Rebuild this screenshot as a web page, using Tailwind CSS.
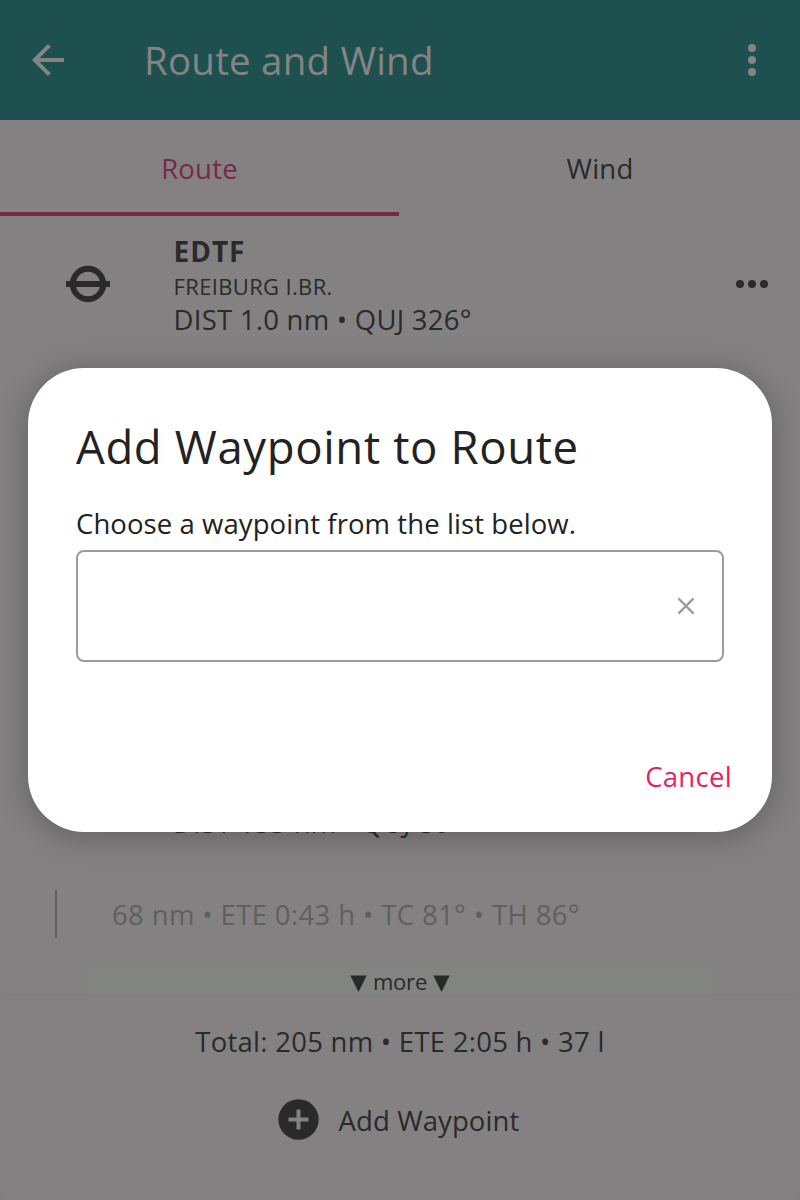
<!DOCTYPE html>
<html lang="en">
<head>
<meta charset="utf-8">
<meta name="viewport" content="width=device-width, initial-scale=1">
<title>Route and Wind</title>
<script src="https://cdn.jsdelivr.net/npm/@tailwindcss/browser@4"></script>
</head>
<body class="relative h-[1200px] w-[800px] overflow-hidden bg-[#848183] font-['Open_Sans',sans-serif] text-[27.5px] leading-8 tracking-[0.2px] text-[#2a2a2a]">
<div class="flex h-full flex-col whitespace-nowrap">
  <header class="flex h-[120px] shrink-0 items-center justify-between bg-[#1e5050] pr-6 pl-6 text-[#848484]">
    <div class="flex items-center">
      <svg class="size-12" viewBox="0 0 48 48" fill="none" stroke="currentColor" stroke-width="4"><path d="M40 24H11M25.4 9.4 10.8 24l14.6 14.6"/></svg>
      <h1 class="pl-[72px] text-[38.5px] leading-[50px]">Route and Wind</h1>
    </div>
    <svg class="size-12" viewBox="0 0 48 48" fill="currentColor"><circle cx="24" cy="12" r="4"/><circle cx="24" cy="24" r="4"/><circle cx="24" cy="36" r="4"/></svg>
  </header>
  <nav class="grid h-24 shrink-0 grid-cols-[399px_401px] text-center">
    <div class="border-b-4 border-[#7b2847] pt-[33px] text-[#7b2847]">Route</div>
    <div class="pt-[33px] pl-px">Wind</div>
  </nav>
  <main class="flex h-[780px] shrink-0 flex-col">
    <div class="flex h-[136px] items-center pl-16 pr-6">
      <svg class="size-12" viewBox="0 0 48 48" fill="none" stroke="currentColor" stroke-width="6"><circle cx="24" cy="24" r="15.2"/><path d="M2 24h44"/></svg>
      <div class="flex-1 pl-[61.5px]">
        <div class="font-bold text-[28px] tracking-[1px] leading-[38px]">EDTF</div>
        <div class="text-[22px] leading-[33px] tracking-[0.35px]">FREIBURG I.BR.</div>
        <div class="leading-[33px] tracking-[0.25px]">DIST 1.0 nm • QUJ 326°</div>
      </div>
      <svg class="size-12" viewBox="0 0 48 48" fill="currentColor"><circle cx="12" cy="24" r="4"/><circle cx="24" cy="24" r="4"/><circle cx="36" cy="24" r="4"/></svg>
    </div>
    <div class="mt-[455px] h-8 pl-[173px] tracking-[0.15px]">DIST 133 nm • QUJ 80°</div>
    <div class="mt-[51px] ml-[55px] flex h-12 items-center border-l-2 border-[#5f5f5f] pt-0.5 pl-[55px] tracking-[0.37px] text-[#5f5f5f]">68 nm • ETE 0:43 h • TC 81° • TH 86°</div>
    <div class="mx-[88px] mt-7 flex h-[30px] items-center justify-center gap-[6px] bg-[#828482] text-[22px] tracking-[-0.2px]">
      <svg class="mt-[5px] size-[17px]" viewBox="0 0 17 17" fill="currentColor"><path d="M.3.5h16.4L8.5 17z"/></svg>
      <span>more</span>
      <svg class="mt-[5px] size-[17px]" viewBox="0 0 17 17" fill="currentColor"><path d="M.3.5h16.4L8.5 17z"/></svg>
    </div>
  </main>
  <footer class="flex h-[204px] shrink-0 flex-col items-center rounded-lg bg-[#848183] pt-[30px] shadow-[0_0_3px_#7a7779]">
    <div class="tracking-[0.26px]">Total: 205 nm • ETE 2:05 h • 37 l</div>
    <div class="mt-[31px] flex h-[60px] items-center gap-5 pr-[3px] tracking-[0.1px]">
      <svg class="size-[41px]" viewBox="0 0 41 41"><circle cx="20.5" cy="20.5" r="20.2" fill="#2a2a2a"/><path d="M10.5 20.5h20M20.5 10.5v20" stroke="#848183" stroke-width="4"/></svg>
      <span class="pt-1">Add Waypoint</span>
    </div>
  </footer>
</div>

<section role="dialog" class="absolute top-[368px] left-7 flex h-[464px] w-[744px] flex-col rounded-[56px] bg-white px-12 whitespace-nowrap text-[#222222] shadow-[0_4px_32px_rgba(0,0,0,0.28)]">
  <h2 class="mt-[50px] text-[45.5px] leading-[56px] tracking-[0.63px]">Add Waypoint to Route</h2>
  <p class="mt-[34px] tracking-[0.08px]">Choose a waypoint from the list below.</p>
  <div class="mt-[10px] flex h-28 items-center justify-end rounded-lg border-2 border-[#9b9b9b] pr-7">
    <svg class="size-4 overflow-visible" viewBox="0 0 16 16" fill="none" stroke="#9b9b9b" stroke-width="2.2"><path d="m.4.4 15.2 15.2M15.6.4.4 15.6"/></svg>
  </div>
  <button class="mt-[99px] -mr-2 self-end tracking-[0.3px] text-[#e91e63]">Cancel</button>
</section>
</body>
</html>
